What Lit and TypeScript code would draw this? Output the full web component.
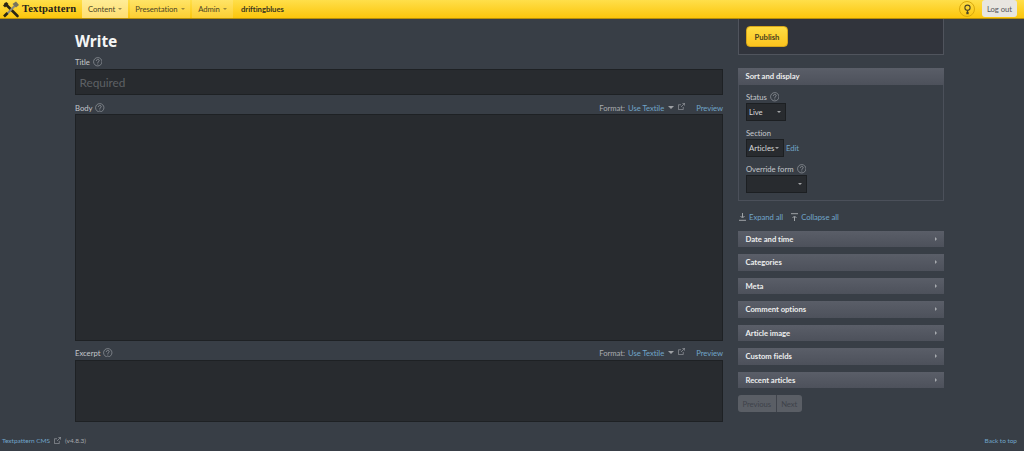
import { LitElement, html, css } from "lit";
import { customElement } from "lit/decorators.js";

const help = html`<svg class="help" viewBox="0 0 10 10"><circle cx="5" cy="5" r="4.400" fill="none" stroke="currentColor" stroke-width=".7"/><path d="M3.500 4c0-2 3-2 3-.1 0 1.100-1.500 1-1.500 2.300M5 6.900v1" fill="none" stroke="currentColor" stroke-width=".8"/></svg>`;
const ext = html`<svg class="ext" viewBox="0 0 8 8"><path d="M6 4.500V7.500H.5V2h3M3.500 4.500 7.500.5M5 .5h2.500V3" fill="none" stroke="currentColor" stroke-width=".7"/></svg>`;
const panels = ["Date and time", "Categories", "Meta", "Comment options", "Article image", "Custom fields", "Recent articles"];

@customElement("app-root")
export class AppRoot extends LitElement {
  static styles = css`
    :host { display: block; width: 1024px; height: 451px; overflow: hidden; background: #383e46; color: #c4c7cb; font-family: Lato, sans-serif; font-size: 7.700px; letter-spacing: -.03px; line-height: 10px; }
    * { box-sizing: border-box; }
    a { color: #71a5c9; }
    .help { width: 9.500px; height: 9.500px; margin-left: 3px; color: #9a9ea4; flex: none; }
    .ext { width: 7px; height: 7px; margin-left: 4px; color: #a5a8ac; margin-bottom: 2px; flex: none; }
    header { height: 19px; display: flex; align-items: stretch; background: linear-gradient(#ffdf4a, #fcc60c); border-bottom: 1px solid #b88f0a; color: #4c4526; }
    .brand { width: 82px; display: flex; align-items: center; padding-left: 2px; gap: 2px; font-family: "Liberation Serif", serif; font-weight: 700; font-size: 10.600px; color: #26221a; letter-spacing: .1px; }
    .brand svg { width: 18px; height: 17px; flex: none; }
    .tab { display: flex; align-items: center; justify-content: center; gap: 3px; background: rgba(255,255,255,.16); margin-right: 2px; }
    .tab.on { background: rgba(255,255,255,.42); }
    .caret { width: 0; height: 0; border: 2.500px solid transparent; border-top: 2.500px solid currentColor; border-bottom: 0; opacity: .55; }
    .site { display: flex; align-items: center; padding-left: 6px; font-weight: 700; color: #3a3520; }
    .grow { flex: 1; }
    .bulb { width: 16px; height: 16px; border-radius: 50%; border: 1px solid #d9a90c; align-self: center; margin-right: 7px; display: flex; align-items: center; justify-content: center; }
    .bulb svg { width: 9px; height: 11px; }
    .logout { align-self: center; width: 35px; height: 17px; margin-right: 7px; margin-top: -1px; background: #e8e6e0; border-radius: 3px; display: flex; align-items: center; justify-content: center; color: #55575a; }
    .wrap { display: grid; grid-template-columns: 648px 206px; column-gap: 15px; padding-left: 75px; }
    h1 { margin: 13px 0 0; height: 18px; font-size: 15.500px; line-height: 18px; font-weight: 700; color: #f4f5f5; font-family: "Noto Sans", sans-serif; letter-spacing: 0; }
    .lab { display: flex; align-items: center; height: 10px; }
    .lab .grow { flex: 1; }
    .title-lab { margin-top: 7px; }
    .title { height: 26px; margin-top: 1.500px; background: #282b2f; border: 1px solid #1e2124; padding-left: 3.500px; font-size: 11.800px; line-height: 25px; color: #5e6165; }
    .body-lab { margin-top: 8px; }
    .ta { margin-top: 1px; background: #282b2f; border: 1px solid #1e2124; }
    .body { height: 227px; }
    .exc-lab { margin-top: 7px; }
    .exc { height: 62px; margin-top: 2px; }
    .fmt { color: #a9acb0; }
    .fmt a { margin-left: 3px; }
    .prev { margin-left: 11px; }
    .tri { margin-left: 4px; width: 0; height: 0; border: 3px solid transparent; border-top: 3px solid #9da0a4; border-bottom: 0; }
    .pub { height: 36px; background: #31343c; border: 1px solid #50545d; border-top: 0; padding: 7px 7px 0; }
    .btn { width: 42px; height: 21px; border-radius: 4px; background: linear-gradient(#ffdd44, #fcc41e); color: #4b4220; font-weight: 700; border: 1px solid #d7a61a; display: flex; align-items: center; justify-content: center; }
    .phead { height: 16.500px; display: flex; align-items: center; justify-content: space-between; padding: 0 7.500px; background: linear-gradient(#5a5e68, #4d515b); color: #eceded; font-weight: 700; }
    .sd { margin-top: 13px; }
    .sdb { height: 116.500px; border: 1px solid #4b505a; border-top: 0; padding: 7.500px 7px 0; }
    .flab { height: 10px; display: flex; align-items: center; }
    .sel { height: 18px; margin-top: 1px; background: #282b2f; border: 1px solid #1c1f22; color: #d8d9da; display: flex; align-items: center; justify-content: space-between; padding: 0 4px 0 2px; flex: none; }
    .w40 { width: 40px; }
    .w38 { width: 38px; }
    .w61 { width: 61px; }
    .row { display: flex; align-items: center; gap: 2px; }
    .sm { width: 0; height: 0; border: 2px solid transparent; border-top: 2px solid #a2a4a6; border-bottom: 0; }
    .sp { margin-top: 7px; }
    .links { display: flex; gap: 8px; margin-top: 11px; height: 10px; align-items: center; padding-left: 1px; }
    .links span { display: flex; align-items: center; gap: 3px; }
    .links svg { width: 7px; height: 8px; color: #9fa3a7; }
    .list { margin-top: 8.500px; display: flex; flex-direction: column; gap: 7px; }
    .tri-r { width: 0; height: 0; border: 2.500px solid transparent; border-left: 2.500px solid #a8abb0; border-right: 0; }
    .pager { display: flex; margin-top: 7px; width: 64px; height: 17px; border-radius: 3px; overflow: hidden; background: #5a5e65; color: #3e424a; }
    .pager span { display: flex; align-items: center; justify-content: center; }
    .pager .p { width: 38.500px; border-right: 1px solid #3f434b; }
    .pager .n { flex: 1; }
    footer { position: absolute; left: 2px; right: 7px; top: 436px; display: flex; justify-content: space-between; font-size: 6.500px; line-height: 10px; color: #a5a8ac; }
    footer .l { display: flex; align-items: center; }
    footer .v { margin-left: 4px; }
  `;

  render() {
    return html`
      <header>
        <div class="brand">
          <svg viewBox="0 0 18 17"><path d="M3.500 3 15.500 15" stroke="#2b2615" stroke-width="2.600" stroke-linecap="round"/><path d="M14.500 3 3.500 14.500" stroke="#8d8b7c" stroke-width="2"/><path d="M10.500 3 14 .5l3 3.500-3 2.500z" fill="#77735f"/><path d="M1 4.500 4.500 1 6.500 3 3 6.500z" fill="#2b2615"/><path d="M2 15.500 5.500 12" stroke="#2b2615" stroke-width="2.600"/></svg>
          <span>Textpattern</span>
        </div>
        <div class="tab on" style="width:46px">Content <i class="caret"></i></div>
        <div class="tab" style="width:60px">Presentation <i class="caret"></i></div>
        <div class="tab" style="width:41px">Admin <i class="caret"></i></div>
        <div class="site">driftingblues</div>
        <div class="grow"></div>
        <div class="bulb"><svg viewBox="0 0 9 11"><circle cx="4.500" cy="3.700" r="2.600" fill="none" stroke="#4c4526" stroke-width="1.100"/><path d="M4.500 6.300V10M3.200 8.300h2.600M3.200 9.700h2.600" stroke="#4c4526" stroke-width="1"/></svg></div>
        <div class="logout">Log out</div>
      </header>
      <div class="wrap">
        <div>
          <h1>Write</h1>
          <div class="lab title-lab">Title ${help}</div>
          <div class="title">Required</div>
          <div class="lab body-lab">Body ${help}<span class="grow"></span><span class="fmt">Format:<a>Use Textile</a></span><i class="tri"></i>${ext}<a class="prev">Preview</a></div>
          <div class="ta body"></div>
          <div class="lab exc-lab">Excerpt ${help}<span class="grow"></span><span class="fmt">Format:<a>Use Textile</a></span><i class="tri"></i>${ext}<a class="prev">Preview</a></div>
          <div class="ta exc"></div>
        </div>
        <div>
          <div class="pub"><div class="btn">Publish</div></div>
          <div class="sd">
            <div class="phead">Sort and display</div>
            <div class="sdb">
              <div class="flab">Status ${help}</div>
              <div class="sel w40"><span>Live</span><i class="sm"></i></div>
              <div class="flab sp">Section</div>
              <div class="row"><div class="sel w38"><span>Articles</span><i class="sm"></i></div><a>Edit</a></div>
              <div class="flab sp">Override form ${help}</div>
              <div class="sel w61"><span></span><i class="sm"></i></div>
            </div>
          </div>
          <div class="links">
            <span><svg viewBox="0 0 7 8"><path d="M3.500 0v4.200M1.500 3l2 2 2-2M0 7.300h7" fill="none" stroke="currentColor"/></svg><a>Expand all</a></span>
            <span><svg viewBox="0 0 7 8"><path d="M3.500 8V3.800M1.500 5l2-2 2 2M0 .7h7" fill="none" stroke="currentColor"/></svg><a>Collapse all</a></span>
          </div>
          <div class="list">
            ${panels.map((p) => html`<div class="phead">${p}<i class="tri-r"></i></div>`)}
          </div>
          <div class="pager"><span class="p">Previous</span><span class="n">Next</span></div>
        </div>
      </div>
      <footer>
        <div class="l"><a>Textpattern CMS</a>${ext}<span class="v">(v4.8.3)</span></div>
        <a>Back to top</a>
      </footer>
    `;
  }
}
